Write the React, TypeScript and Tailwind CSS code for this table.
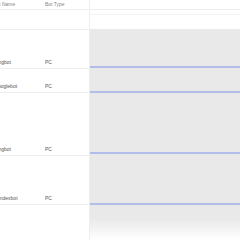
import React from "react";

const rows = [
  { name: "Bingbot", h: "h-[39px]" },
  { name: "Googlebot", h: "h-[24px]" },
  { name: "Bingbot", h: "h-[63px]" },
  { name: "Yandexbot", h: "h-[49px]" },
];

export default function App() {
  return (
    <div className="w-[240px] h-[240px] bg-white overflow-hidden flex text-[5px] text-[#555]" style={{ fontFamily: "'Liberation Sans', Arial, sans-serif" }}>
      <div className="w-[89px] shrink-0 overflow-hidden">
        <div className="h-[10px] border-b border-[#eee] flex items-center text-[#888] -ml-[7px]">
          <div className="w-[52px]">Bot Name</div>
          <div>Bot Type</div>
        </div>
        <div className="h-[20px] border-b border-[#eee]" />
        {rows.map((r, i) => (
          <div key={i} className={`${r.h} border-b border-[#eee] flex items-end pb-[2px] -ml-[6px]`}>
            <div className="w-[51px] shrink-0">{r.name}</div>
            <div>PC</div>
          </div>
        ))}
      </div>
      <div className="w-px bg-[#eee] shrink-0" />
      <div className="flex-1 flex flex-col">
        <div className="h-[10px] border-b border-[#eee]" />
        <div className="h-[5px] border-b border-[#f3f3f3]" />
        <div className="h-[14px]" />
        <div className="flex-1 bg-gradient-to-b from-[#e9e9e9] via-[#e9e9e9] via-90% to-white flex flex-col">
          <div className="h-[39px] border-b-2 border-[#b3bdec]" />
          <div className="h-[25px] border-b-2 border-[#b3bdec]" />
          <div className="h-[61px] border-b-2 border-[#b3bdec]" />
          <div className="h-[51px] border-b-2 border-[#b3bdec]" />
        </div>
      </div>
    </div>
  );
}
